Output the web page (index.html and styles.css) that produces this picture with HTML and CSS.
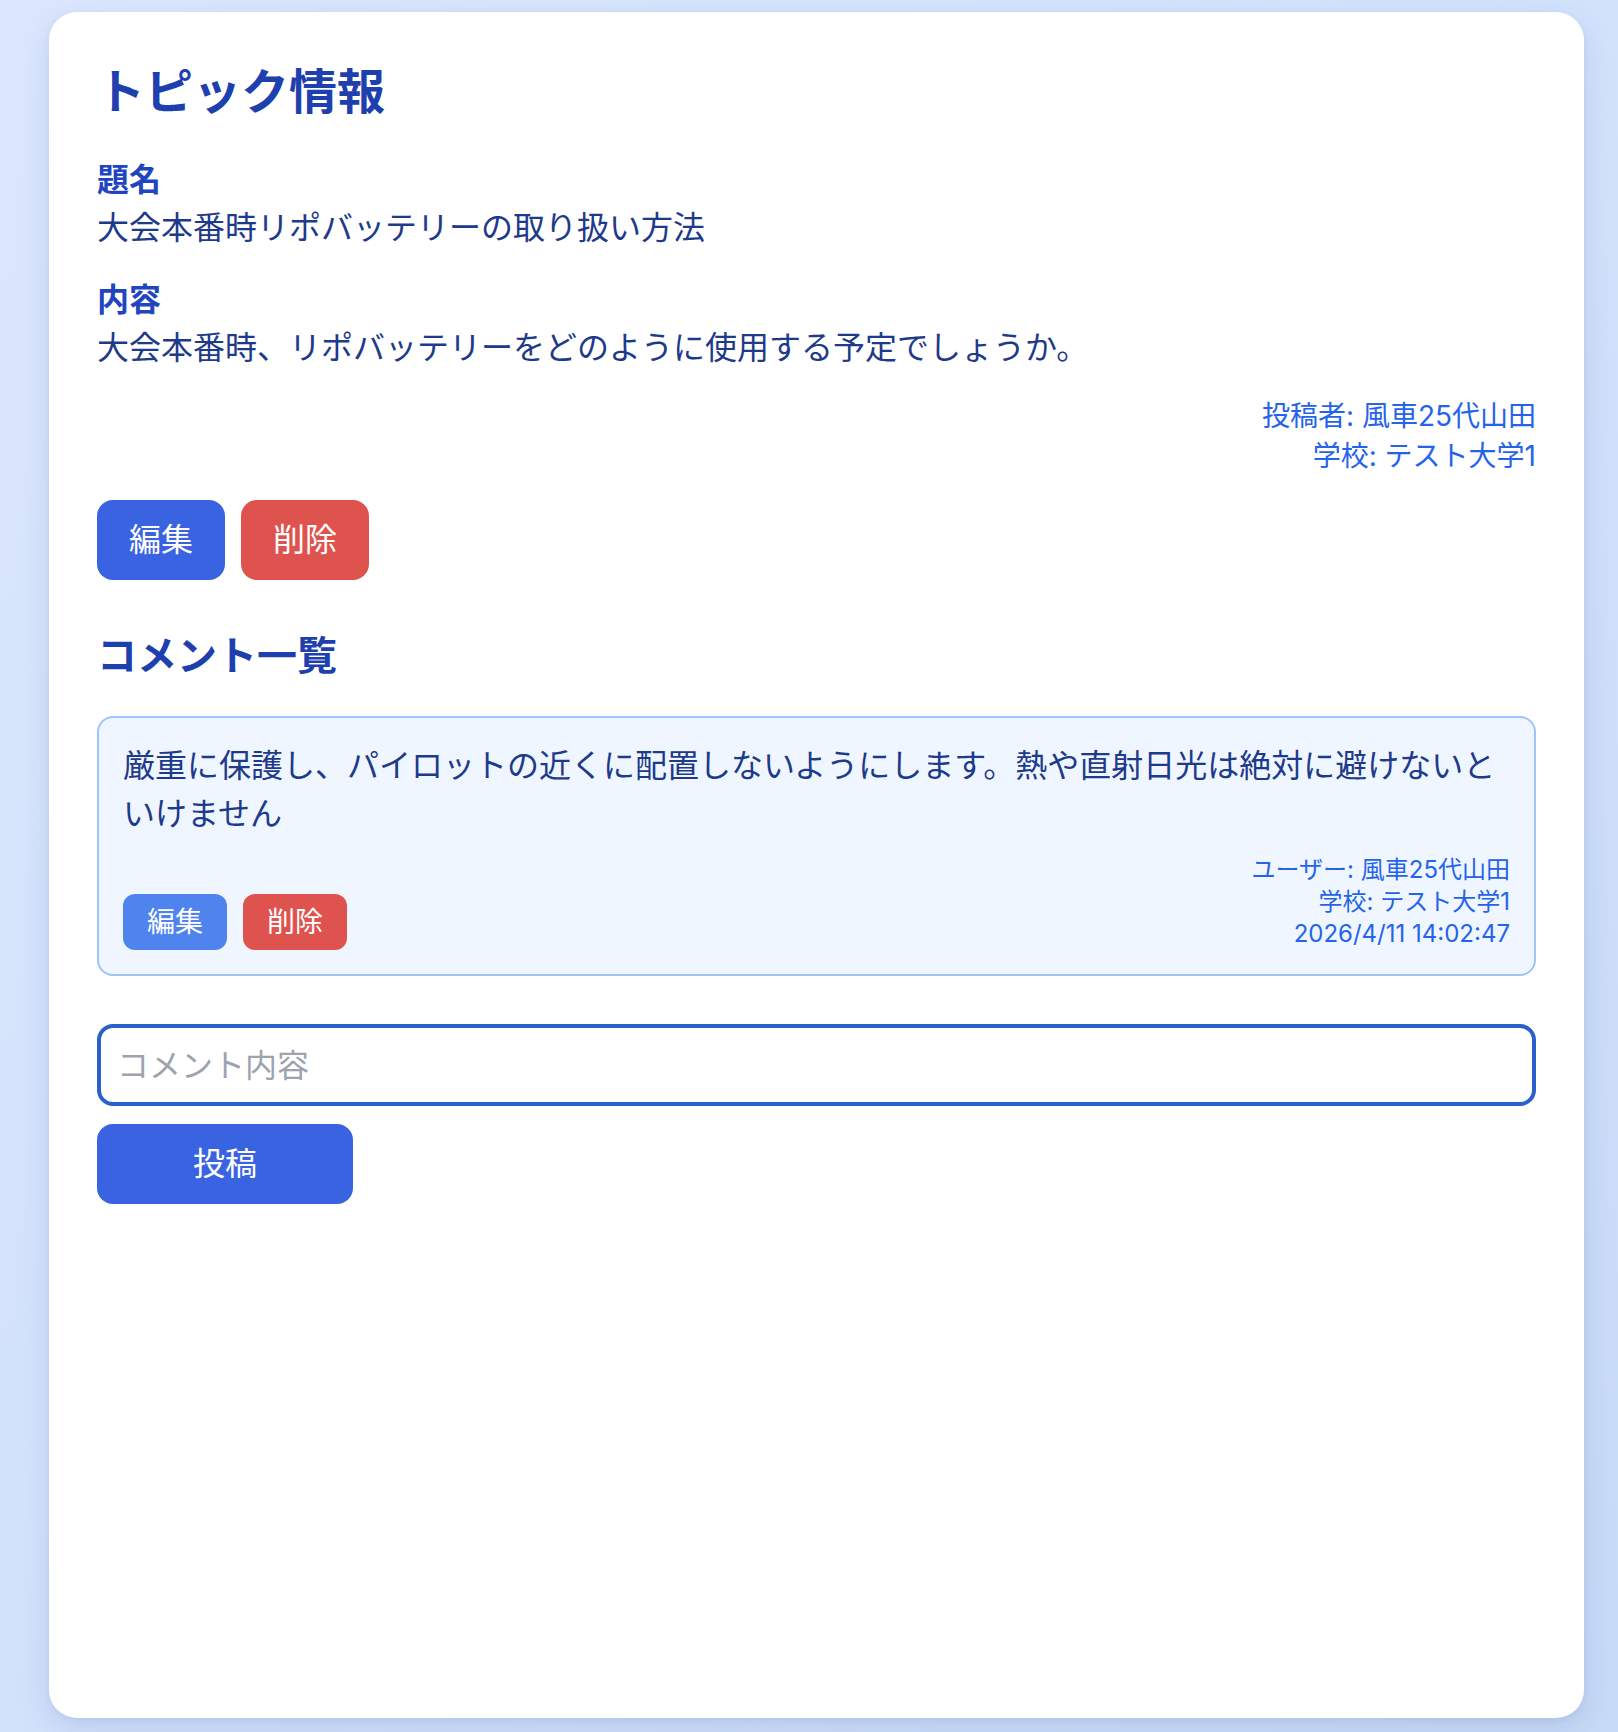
FILE: index.html
```html
<!DOCTYPE html>
<html lang="ja">
<head>
<meta charset="utf-8">
<title>トピック情報</title>
<link rel="stylesheet" href="styles.css">
</head>
<body>
<div class="page">
  <main class="card">
    <h1 class="title">トピック情報</h1>

    <section class="field">
      <h2 class="label">題名</h2>
      <p class="value">大会本番時リポバッテリーの取り扱い方法</p>
    </section>

    <section class="field">
      <h2 class="label">内容</h2>
      <p class="value">大会本番時、リポバッテリーをどのように使用する予定でしょうか。</p>
    </section>

    <div class="meta">
      <p>投稿者: 風車25代山田</p>
      <p>学校: テスト大学1</p>
    </div>

    <div class="actions">
      <button class="btn btn-edit" type="button">編集</button>
      <button class="btn btn-delete" type="button">削除</button>
    </div>

    <h2 class="section-title">コメント一覧</h2>

    <ul class="comments">
      <li class="comment">
        <p class="comment-text">厳重に保護し、パイロットの近くに配置しないようにします。熱や直射日光は絶対に避けないといけません</p>
        <div class="comment-footer">
          <div class="comment-actions">
            <button class="btn-sm btn-sm-edit" type="button">編集</button>
            <button class="btn-sm btn-sm-delete" type="button">削除</button>
          </div>
          <div class="comment-meta">
            <p>ユーザー: 風車25代山田</p>
            <p>学校: テスト大学1</p>
            <p>2026/4/11 14:02:47</p>
          </div>
        </div>
      </li>
    </ul>

    <form class="comment-form">
      <input class="comment-input" type="text" placeholder="コメント内容">
      <button class="btn btn-post" type="button">投稿</button>
    </form>
  </main>
</div>
</body>
</html>
```

FILE: styles.css
```css
* {
  box-sizing: border-box;
}

html, body {
  margin: 0;
  padding: 0;
}

body {
  min-height: 1732px;
  background: linear-gradient(135deg, #dbe7fd 0%, #d2e2fb 50%, #c7daf7 100%);
  font-family: Inter, "Noto Sans CJK JP", "Noto Sans", sans-serif;
  color: #1e3a8a;
}

.page {
  padding: 12px 34px 14px 49px;
  display: flex;
}

.card {
  flex: 1;
  min-height: 1706px;
  background: #ffffff;
  border-radius: 28px;
  padding: 48px;
  box-shadow: 0 10px 30px rgba(40, 70, 150, 0.13), 0 2px 6px rgba(40, 70, 150, 0.06);
  display: flex;
  flex-direction: column;
}

.title {
  margin: 0 0 32px;
  font-size: 48px;
  line-height: 64px;
  font-weight: 700;
  color: #1e40af;
}

.field {
  margin: 0 0 24px;
}

.label {
  margin: 0;
  font-size: 32px;
  line-height: 48px;
  font-weight: 700;
  color: #2145c0;
}

.value {
  margin: 0;
  font-size: 32px;
  line-height: 48px;
  color: #1e3a8a;
}

.meta {
  text-align: right;
  color: #2563eb;
  font-size: 28px;
  line-height: 40px;
  margin: 0 0 24px;
}

.meta p,
.comment-meta p {
  margin: 0;
}

.actions {
  display: flex;
  gap: 16px;
  margin: 0 0 48px;
}

.btn {
  border: none;
  border-radius: 16px;
  padding: 16px 32px;
  font-family: inherit;
  font-size: 32px;
  line-height: 48px;
  color: #ffffff;
  cursor: pointer;
}

.btn-edit {
  background: #3a63e2;
}

.btn-delete {
  background: #df534f;
}

.section-title {
  margin: 0 0 32px;
  font-size: 40px;
  line-height: 56px;
  font-weight: 700;
  color: #1e40af;
}

.comments {
  list-style: none;
  margin: 0 0 48px;
  padding: 0;
}

.comment {
  background: #eff6ff;
  border: 2px solid #9fc4f8;
  border-radius: 16px;
  padding: 24px;
}

.comment-text {
  margin: 0;
  font-size: 32px;
  line-height: 48px;
  color: #1e3a8a;
}

.comment-footer {
  margin-top: 16px;
  display: flex;
  justify-content: space-between;
  align-items: flex-end;
}

.comment-actions {
  display: flex;
  gap: 16px;
}

.btn-sm {
  border: none;
  border-radius: 12px;
  padding: 8px 24px;
  font-family: inherit;
  font-size: 28px;
  line-height: 40px;
  color: #ffffff;
  cursor: pointer;
}

.btn-sm-edit {
  background: #4f84ef;
}

.btn-sm-delete {
  background: #df534f;
}

.comment-meta {
  text-align: right;
  font-size: 24px;
  line-height: 32px;
  color: #2563eb;
}

.comment-form {
  display: flex;
  flex-direction: column;
  align-items: flex-start;
  gap: 18px;
}

.comment-input {
  width: 100%;
  height: 82px;
  border: 4px solid #2b5fc9;
  border-radius: 16px;
  padding: 12px 16px;
  font-family: inherit;
  font-size: 32px;
  line-height: 48px;
  color: #1e3a8a;
  background: #ffffff;
  outline: none;
}

.comment-input::placeholder {
  color: #9ca3af;
}

.btn-post {
  width: 256px;
  background: #3a63e2;
}
```
